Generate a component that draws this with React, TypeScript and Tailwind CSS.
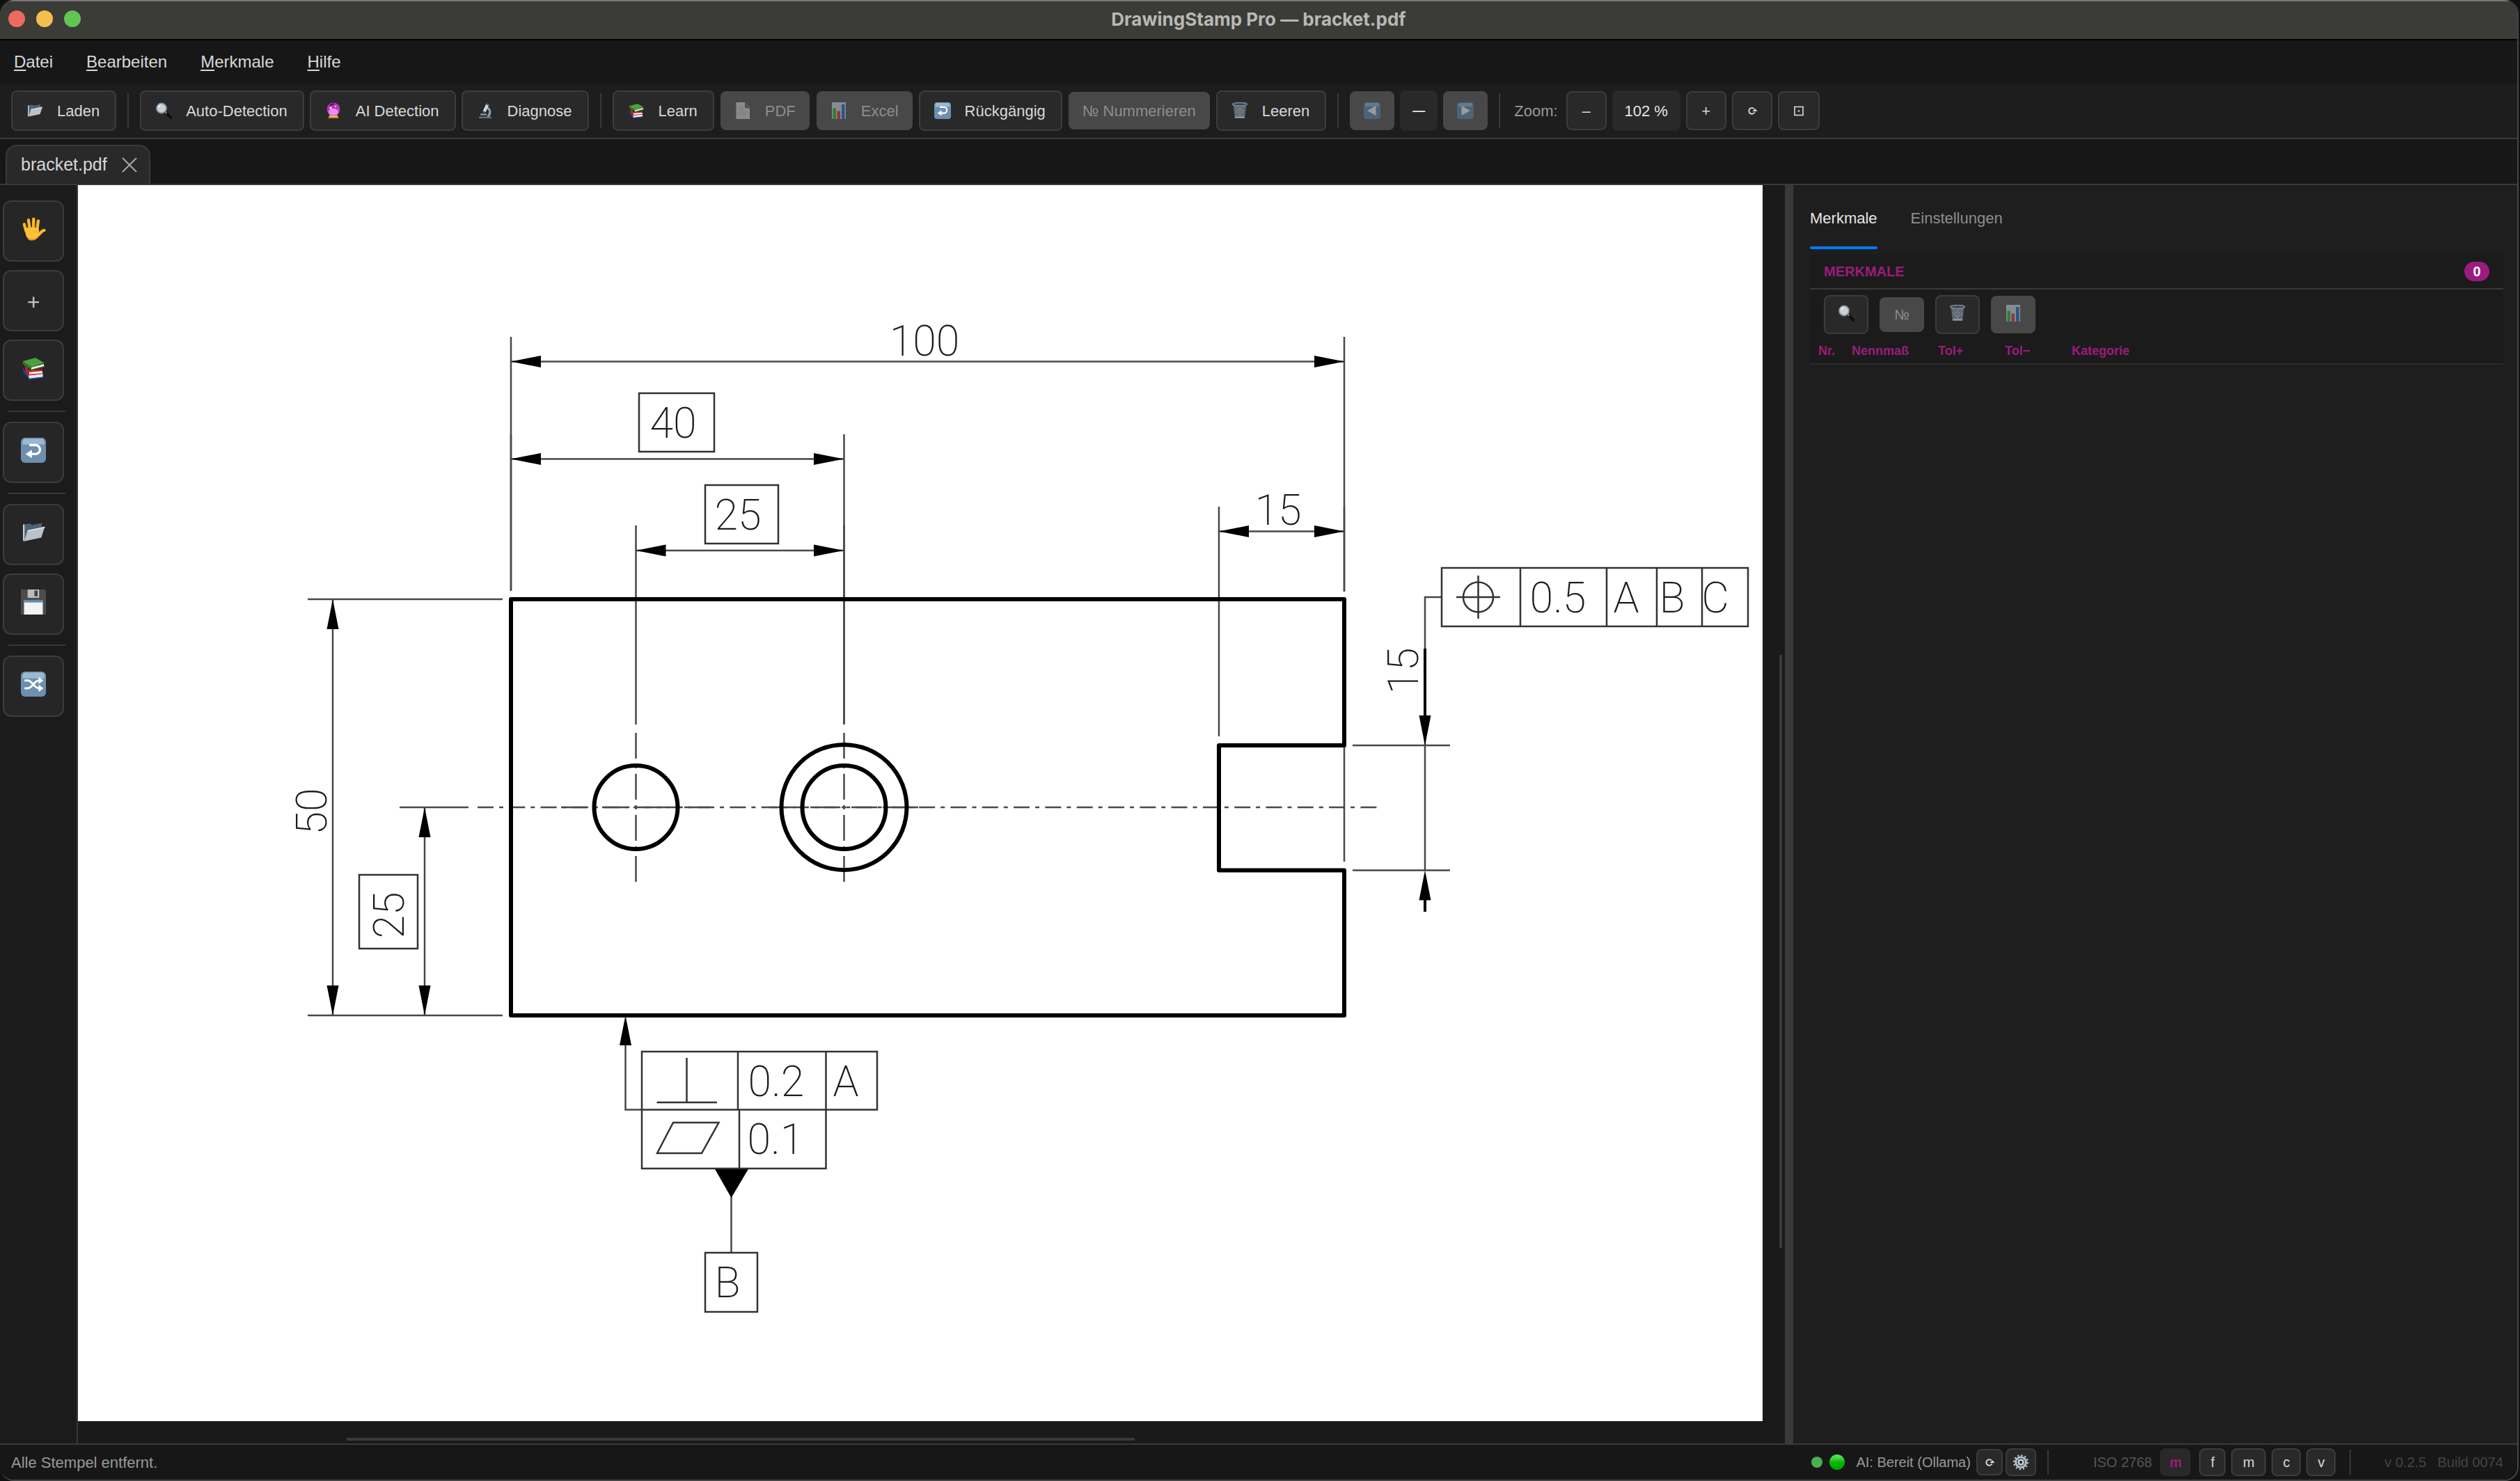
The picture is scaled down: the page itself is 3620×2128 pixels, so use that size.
import type { ReactNode } from 'react';

type IconName =
    | 'folder' | 'search' | 'orb' | 'microscope' | 'books' | 'doc' | 'chart' | 'undo' | 'trash'
    | 'prev' | 'next' | 'hand' | 'floppy' | 'shuffle' | 'gear' | 'reload' | 'fit';

const shapes: Record<IconName, ReactNode> = {
    folder: (
        <>
            <path d="M2 4.5l7-1 1.5 1.5L20 3v12L3 20z" fill="#4f6371" />
            <path d="M2 4.5l1.5-.3V18L3 20.5 2 20z" fill="#c3ced6" />
            <path d="M6.5 10L23 6.5 19.5 17 3 20.5z" fill="#b9c2cb" />
            <path d="M6.5 10L23 6.5l-.4 1.2L6.7 11z" fill="#dfe5ea" />
        </>
    ),
    search: (
        <>
            <path d="M15 14l7.5 8.5" stroke="#0c0c0c" strokeWidth="3.6" strokeLinecap="round" />
            <path d="M13.6 12.6l3 3.4" stroke="#8d9297" strokeWidth="1.8" />
            <circle cx="9" cy="8.5" r="7" fill="#cfcfcf" stroke="#7d98ad" strokeWidth="1.8" />
            <path d="M4.5 7a5 5 0 014-3.6" stroke="#fff" strokeWidth="1.2" fill="none" />
        </>
    ),
    orb: (
        <>
            <path d="M6 18h12l1.5 5h-15z" fill="#c08a24" />
            <path d="M7 19.5h10v1.5H7z" fill="#f6dc7a" />
            <circle cx="12" cy="10" r="9.5" fill="#b736b8" />
            <ellipse cx="12" cy="14" rx="7" ry="5" fill="#ee8cf2" />
            <path d="M7 5c1.5-2 4-2.8 6-2.4" stroke="#3e1250" strokeWidth="2" fill="none" />
            <circle cx="8" cy="8" r="1.5" fill="#fff" />
            <circle cx="15" cy="6" r="1.1" fill="#fbd9ff" />
        </>
    ),
    microscope: (
        <>
            <path d="M3 20.5h18V23H3z" fill="#5d6f7a" />
            <path d="M5 16.5h9v2H5z" fill="#9aa9b3" />
            <path d="M15 8c5 2 5 9 .5 12.5" stroke="#93a5b1" strokeWidth="3" fill="none" />
            <path d="M13.5 2l4 1.8-5 10.7-4-1.8z" fill="#c8d6e0" />
            <path d="M14 1l4 1.8-1 2-4-1.8z" fill="#4b545b" />
            <path d="M8.300 12.2l4.200 1.900-1 2.100-4-1.800z" fill="#3f4a52" />
        </>
    ),
    books: (
        <>
            <path d="M2 12l5 6v3.500L2.500 16z" fill="#2b3fae" />
            <path d="M7 18l14-1.500v4L8 22.500z" fill="#e9e9ee" />
            <path d="M7 17.500l15-1.800v1.500L7 19zM8 21.800l14-1.600v1L8 23z" fill="#2b3fae" />
            <path d="M4 9l3.500 5 13-1v4.500L7 19 4 13z" fill="#cf1f1b" />
            <path d="M8 15.800l12.500-1v2L8 17.900z" fill="#f4f4f4" />
            <path d="M1.500 5.500L14 2l8.500 5-12.500 4z" fill="#4aa23a" />
            <path d="M1.500 5.500L10 11v3L2 8.300z" fill="#2c7423" />
            <path d="M10 11.300l12-3.300v2.300L10 13.500z" fill="#f5f5f5" />
            <path d="M10 13.200l13-3.400v1L10 14.400z" fill="#2c7423" />
        </>
    ),
    doc: (
        <>
            <path d="M2.500 0H15l7 8v16H2.500z" fill="#8b8b8b" />
            <path d="M15 0l7 9.500-7-2z" fill="#4d4d4d" />
            <path d="M5.500 7h6M5.500 10.500h9M5.500 14h12M5.500 17.500h12" stroke="#777" strokeWidth="1" />
        </>
    ),
    chart: (
        <>
            <path d="M2 0h20v24H2z" fill="#858d94" />
            <path d="M3.500 8.500H8V24H3.500z" fill="#2f7d33" />
            <path d="M9.500 12.500H14V24H9.500z" fill="#96333a" />
            <path d="M16 3h4.500v21H16z" fill="#2c5588" />
        </>
    ),
    undo: (
        <>
            <rect x="0" y="0" width="24" height="24" rx="4" fill="#6d8fb0" />
            <path d="M1.500 4.500Q1.500 1 4.500 1h15q3 0 3 3.500v2h-21z" fill="#9bb9d3" />
            <path d="M8 7h6a4.200 4.200 0 010 8.600h-4" fill="none" stroke="#fff" strokeWidth="2.200" />
            <path d="M10.500 11.500v8L4.500 15.600z" fill="#fff" />
        </>
    ),
    trash: (
        <>
            <path d="M2.500 3h19l-2.300 20H4.800z" fill="#59616a" />
            <path d="M5 6l13 14M8 5l11 11M4.500 10l10 11M19 6L6 20M16 5L5 16M19.500 10l-10 11" stroke="#8e98a2" strokeWidth=".8" />
            <path d="M5 21.500h14" stroke="#a4afb9" strokeWidth="1.500" />
            <ellipse cx="12" cy="2.800" rx="10.500" ry="2.300" fill="#3c434a" stroke="#7f93a6" strokeWidth="1.300" />
        </>
    ),
    prev: (
        <>
            <rect width="24" height="24" rx="4" fill="#4d6378" />
            <path d="M2 3.500Q2 1 5 1h14q3 0 3 2.500V6H2z" fill="#5f7b92" />
            <path d="M17.500 5v14L5 12z" fill="#9b9b9b" />
        </>
    ),
    next: (
        <>
            <rect width="24" height="24" rx="4" fill="#4d6378" />
            <path d="M2 3.500Q2 1 5 1h14q3 0 3 2.500V6H2z" fill="#5f7b92" />
            <path d="M6.500 5v14L19 12z" fill="#9b9b9b" />
        </>
    ),
    hand: (
        <>
            <path
                d="M5 14L3.200 7.500M8.500 12L7.300 3.500M12 12l.2-9.500M15.500 12.500L16.600 4.300M17 17.500c1.800-1.300 3-4 5.300-4.200"
                stroke="#f9b828" strokeWidth="2.900" strokeLinecap="round" fill="none"
            />
            <path d="M3.700 11.500c4-1.500 9-1.500 13.300 0l.5 3.500 1 1.500c-2 4-4 6.500-8 6.500-4.500 0-6-4-6.800-11.500z" fill="#fcc237" />
            <path d="M6 19.500c2 3.500 8 3.500 11-.5" stroke="#df8f16" strokeWidth="1" fill="none" />
            <path d="M12 15c2-.8 4-.5 5 1" stroke="#eda01d" strokeWidth=".8" fill="none" />
        </>
    ),
    floppy: (
        <>
            <path d="M0 0h23l1 1.500V24H0z" fill="#4c4c4c" />
            <path d="M6.500 0h11v8h-11z" fill="#bcbcbc" />
            <path d="M13 1h3v5.500h-3z" fill="#3f3f3f" />
            <path d="M3 10.500h18V24H3z" fill="#f3f3f3" />
            <path d="M3 10.500h18v2H3z" fill="#5794c7" />
        </>
    ),
    shuffle: (
        <>
            <rect width="24" height="24" rx="4" fill="#6d8fb0" />
            <path d="M1.500 4.500Q1.500 1 4.500 1h15q3 0 3 3.500v2h-21z" fill="#9bb9d3" />
            <path d="M3.500 8.500h3c4.500 0 6 7.500 11 7.500M3.500 16h3c4.500 0 6-7.500 11-7.500" fill="none" stroke="#fff" strokeWidth="2" />
            <path d="M17 5l4.500 3.500L17 12zM17 12.500l4.500 3.500-4.500 3.500z" fill="#fff" />
        </>
    ),
    gear: (
        <>
            <circle cx="12" cy="12" r="10" fill="none" stroke="#b7c6d4" strokeWidth="2.400" strokeDasharray="2.200 3.036" />
            <circle cx="12" cy="12" r="7.500" fill="#4e5660" stroke="#b7c6d4" strokeWidth="2.600" />
            <path d="M12 5v14M5 12h14M7 7l10 10M17 7L7 17" stroke="#94a3b1" strokeWidth="1.200" />
            <circle cx="12" cy="12" r="3.200" fill="#2b2b2b" stroke="#dbe5ee" strokeWidth="1.800" />
        </>
    ),
    reload: (
        <>
            <path d="M14.600 9.300A4.300 4.300 0 1015.600 14" fill="none" stroke="#dadada" strokeWidth="1.900" />
            <path d="M12.500 13h7l-3.500-4z" fill="#dadada" />
        </>
    ),
    fit: (
        <>
            <rect x="6" y="6.500" width="12" height="12" fill="none" stroke="#dadada" strokeWidth="1.600" />
            <circle cx="12" cy="12.500" r="1.300" fill="#dadada" />
        </>
    ),
};

function Icon({ name, className = 'w-6 h-6' }: { name: IconName; className?: string }) {
    return (
        <svg className={`shrink-0 ${className}`} viewBox="0 0 24 24" aria-hidden="true">
            {shapes[name]}
        </svg>
    );
}

interface ToolButtonProps {
    icon?: IconName;
    label?: string;
    title?: string;
    disabled?: boolean;
    className?: string;
}

function ToolButton({ icon, label, title, disabled = false, className = 'h-[58px] pl-5 pr-[22px]' }: ToolButtonProps) {
    return (
        <button
            title={title}
            aria-label={label ?? title}
            disabled={disabled}
            className={`flex items-center justify-center gap-5 rounded-lg whitespace-nowrap ${disabled
                ? 'bg-[#484848] text-[#8d8d8d]'
                : 'bg-[#292929] border-2 border-[#3c3c3c] text-[#d8d8d8]'
                } ${className}`}
        >
            {icon && <Icon name={icon} />}
            {label && <span>{label}</span>}
        </button>
    );
}

function Separator() {
    return <div className="w-0.5 h-[50px] mx-2 bg-[#383838]" />;
}

const menus = ['Datei', 'Bearbeiten', 'Merkmale', 'Hilfe'];

const sideTools: { icon?: IconName; title: string; split?: boolean }[] = [
    { icon: 'hand', title: 'Verschieben' },
    { title: 'Hinzufügen' },
    { icon: 'books', title: 'Learn' },
    { icon: 'undo', title: 'Rückgängig', split: true },
    { icon: 'folder', title: 'Laden', split: true },
    { icon: 'floppy', title: 'Speichern' },
    { icon: 'shuffle', title: 'Neu ordnen', split: true },
];

type Dir = 'l' | 'r' | 'u' | 'd';

// Filled arrow head with its tip at x/y
function Arrow({ x, y, dir }: { x: number; y: number; dir: Dir }) {
    const angle = { l: 0, u: 90, r: 180, d: 270 }[dir];
    return <path d="M0 0l43-8.500v17z" transform={`translate(${x} ${y}) rotate(${angle})`} fill="#000" />;
}

function Label({ x, y, children, vertical = false }: { x: number; y: number; children: string; vertical?: boolean }) {
    return (
        <text
            x={x}
            y={y}
            textAnchor="middle"
            transform={vertical ? `rotate(-90 ${x} ${y})` : undefined}
            className="font-['Liberation_Sans_Narrow','Roboto',sans-serif] font-extralight text-[61px] fill-[#1c1c1c]"
        >
            {children}
        </text>
    );
}

function BracketDrawing() {
    return (
        <svg className="w-full h-full" viewBox="112 266 2420 1776" role="img" aria-label="bracket.pdf">
            {/* Extension and dimension lines */}
            <g fill="none" stroke="#484848" strokeWidth="2.500">
                <path d="M734 484V849M1931 484V850M734 519.500H1931" />
                <path d="M734 659.500H1212M1212.500 624V1041M734 624V849" />
                <path d="M913.500 791H1212M913.500 755V1041M1212.500 755V1041" />
                <path d="M1751 763.500H1931M1751 728V1058M1931 728V850M1931 1071V1238" />
                <path d="M442 861H722M478 861V1459M442 1459H722M575 1459H722" />
                <path d="M574 1160H673M610 1160V1459" />
                <path d="M1943 1071H2083M1943 1250.500H2083M2071 858H2047V1250" />
                <path d="M898.500 1480V1594.500H922M1050.500 1700V1800" />
            </g>
            <path d="M2047 932V1040M2047 1280V1310" stroke="#000" strokeWidth="4" />

            {/* Centre lines */}
            <g fill="none" stroke="#484848" strokeWidth="2.500">
                <path d="M686 1160H1979" strokeDasharray="23 8 6 8.300" />
                <path d="M806 1160H1021M1105 1160H1320M913.500 1053V1268M1212.500 1053V1268" strokeDasharray="37 8 6 8" />
            </g>

            {/* Part outline */}
            <g fill="none" stroke="#000" strokeWidth="6" strokeLinejoin="round">
                <path d="M734 861H1931V1071H1751V1250.500H1931V1459H734z" />
                <circle cx="913.500" cy="1160" r="60" />
                <circle cx="1212.500" cy="1160" r="60" />
                <circle cx="1212.500" cy="1160" r="90" />
            </g>

            <Arrow x={734} y={519.5} dir="l" />
            <Arrow x={1931} y={519.5} dir="r" />
            <Arrow x={734} y={659.5} dir="l" />
            <Arrow x={1212} y={659.5} dir="r" />
            <Arrow x={913.5} y={791} dir="l" />
            <Arrow x={1212} y={791} dir="r" />
            <Arrow x={1751} y={763.5} dir="l" />
            <Arrow x={1931} y={763.5} dir="r" />
            <Arrow x={478} y={861} dir="u" />
            <Arrow x={478} y={1459} dir="d" />
            <Arrow x={610} y={1160} dir="u" />
            <Arrow x={610} y={1459} dir="d" />
            <Arrow x={2047} y={1071} dir="d" />
            <Arrow x={2047} y={1250.5} dir="u" />
            <Arrow x={898.5} y={1459} dir="u" />
            <path d="M1026.500 1679h49L1050.500 1721z" fill="#000" />

            {/* Boxed dimensions and tolerance frames */}
            <g fill="none" stroke="#333" strokeWidth="2.500">
                <path d="M918 565H1026V649H918zM1013 697H1118V781H1013zM516 1257H600V1363H516zM1013 1800H1088V1885H1013z" />
                <path d="M2071 816H2511V900H2071zM2184 816V900M2308 816V900M2380 816V900M2445 816V900" />
                <path d="M922 1511H1260V1594.500H922zM1060 1511V1594M1186.500 1511V1594M922 1594V1679H1186.500V1594M1062 1594V1679" />
                <circle cx="2123.500" cy="858" r="21.500" />
                <path d="M2092 858H2155M2123.500 827V889M986.500 1520V1584M943.500 1584H1030" />
                <path d="M944 1657L967 1613H1032.500L1008 1657z" />
            </g>

            <Label x={1328} y={511}>100</Label>
            <Label x={967} y={629}>40</Label>
            <Label x={1060} y={761}>25</Label>
            <Label x={1836} y={754}>15</Label>
            <Label x={469} y={1166} vertical>50</Label>
            <Label x={580} y={1315} vertical>25</Label>
            <Label x={2037} y={964} vertical>15</Label>
            <Label x={2238} y={880}>0.5</Label>
            <Label x={2336} y={880}>A</Label>
            <Label x={2402} y={880}>B</Label>
            <Label x={2464} y={880}>C</Label>
            <Label x={1115} y={1575}>0.2</Label>
            <Label x={1215} y={1575}>A</Label>
            <Label x={1114} y={1658}>0.1</Label>
            <Label x={1045} y={1864}>B</Label>
        </svg>
    );
}

function MerkmalePanel() {
    return (
        <aside className="w-[1040px] shrink-0 bg-[#1e1e1e] pl-6 pr-5">
            <nav className="flex gap-12 pt-8 text-[22px]">
                <button className="h-[60px] flex flex-col justify-between text-[#e6e6e6]">
                    <span className="leading-8">Merkmale</span>
                    <span className="w-full h-1 rounded-full bg-[#007aff]" />
                </button>
                <button className="h-[60px] flex flex-col text-[#8d8d8d]">
                    <span className="leading-8">Einstellungen</span>
                </button>
            </nav>

            <section className="mt-2 bg-[#1b1b1b]">
                <header className="h-[50px] flex items-center justify-between px-5 border-b-2 border-[#3a3a3a]">
                    <h2 className="text-[20px] font-bold text-[#9b1b7e]">MERKMALE</h2>
                    <span className="w-9 h-7 flex items-center justify-center rounded-full bg-[#9b1b7e] text-white text-[20px] font-bold">0</span>
                </header>
                <div className="h-[72px] flex items-center gap-4 px-5 text-[20px]">
                    <ToolButton icon="search" title="Suchen" className="w-16 h-[56px] pb-1" />
                    <ToolButton label="№" disabled className="w-16 h-[50px]" />
                    <ToolButton icon="trash" title="Leeren" className="w-16 h-[56px] pb-1" />
                    <ToolButton icon="chart" title="Excel" disabled className="w-16 h-[54px] pb-1" />
                </div>
                <table className="w-full table-fixed text-left text-[18px] leading-6 text-[#9b1b7e]">
                    <thead>
                        <tr className="border-b-2 border-[#2b2b2b]">
                            <th className="w-12 pl-3 pt-1 pb-1.5">Nr.</th>
                            <th className="w-[124px] pl-3 pt-1 pb-1.5">Nennmaß</th>
                            <th className="w-24 pl-3 pt-1 pb-1.5">Tol+</th>
                            <th className="w-24 pl-3 pt-1 pb-1.5">Tol−</th>
                            <th className="pl-3 pt-1 pb-1.5">Kategorie</th>
                        </tr>
                    </thead>
                    <tbody />
                </table>
            </section>
        </aside>
    );
}

function StatusBar() {
    return (
        <footer className="h-[52px] shrink-0 flex items-center justify-between pl-4 pr-5 bg-[#171717] border-t-2 border-[#3a3a3a] text-[20px]">
            <span className="text-[22px] text-[#999]">Alle Stempel entfernt.</span>
            <div className="flex items-center">
                <span className="w-4 h-4 rounded-full bg-[#4caf50]" />
                <span className="w-[22px] h-[22px] ml-2.5 rounded-full bg-linear-to-b from-[#5cf05c] via-[#00b800] to-[#00a000]" />
                <span className="ml-4 mr-2 text-[#999]">AI: Bereit (Ollama)</span>
                <ToolButton icon="reload" title="Neu verbinden" className="w-[38px] h-[38px]" />
                <ToolButton icon="gear" title="Einstellungen" className="w-11 h-[40px] ml-1" />
                <div className="w-0.5 h-9 ml-4 bg-[#383838]" />
                <span className="ml-16 mr-3 text-[#555]">ISO 2768</span>
                <button className="w-11 h-10 rounded-lg bg-[#292929] font-bold text-[#9b1b7e]">m</button>
                <div className="flex gap-2 ml-3 font-medium">
                    <ToolButton label="f" className="w-[38px] h-10" />
                    <ToolButton label="m" className="w-[50px] h-10" />
                    <ToolButton label="c" className="w-[42px] h-10" />
                    <ToolButton label="v" className="w-[42px] h-10" />
                </div>
                <div className="w-0.5 h-9 ml-5 bg-[#383838]" />
                <span className="ml-12 text-[#444]">v 0.2.5</span>
                <span className="ml-4 text-[#444]">Build 0074</span>
            </div>
        </footer>
    );
}

export default function App() {
    return (
        <div className="h-screen bg-[#111] pr-0.5 font-['Liberation_Sans',Arial,sans-serif]">
            <div className="h-full flex flex-col overflow-hidden rounded-[20px] border-r-2 border-b-2 border-[#454545] bg-[#171717]">
                {/* Title bar */}
                <header className="relative h-[58px] shrink-0 flex items-center justify-center pb-1 bg-[#3b3b38] border-t-2 border-t-[#777] border-b-2 border-b-black">
                    <div className="absolute left-3 flex gap-4">
                        <span className="w-6 h-6 rounded-full bg-[#ed6a5e]" />
                        <span className="w-6 h-6 rounded-full bg-[#f5bf4f]" />
                        <span className="w-6 h-6 rounded-full bg-[#61c554]" />
                    </div>
                    <h1 className="font-['Inter',sans-serif] text-[26px] font-bold text-[#b8b8b6]">DrawingStamp Pro — bracket.pdf</h1>
                </header>

                {/* Menu */}
                <nav className="h-[62px] shrink-0 flex items-center gap-12 pl-5 text-[24px] text-[#d8d8d8]">
                    {menus.map((menu) => (
                        <button key={menu}>
                            <span className="underline underline-offset-3 decoration-2">{menu[0]}</span>
                            {menu.slice(1)}
                        </button>
                    ))}
                </nav>

                {/* Toolbar */}
                <div className="h-20 shrink-0 flex items-center gap-2 px-4 bg-[#1d1d1d] border-b-2 border-[#3a3a3a] text-[22px]">
                    <ToolButton icon="folder" label="Laden" />
                    <Separator />
                    <ToolButton icon="search" label="Auto-Detection" />
                    <ToolButton icon="orb" label="AI Detection" />
                    <ToolButton icon="microscope" label="Diagnose" />
                    <Separator />
                    <ToolButton icon="books" label="Learn" />
                    <ToolButton icon="doc" label="PDF" disabled className="h-14 px-5 mx-px" />
                    <ToolButton icon="chart" label="Excel" disabled className="h-14 px-5 mx-px" />
                    <ToolButton icon="undo" label="Rückgängig" />
                    <ToolButton label="№ Nummerieren" disabled className="h-[54px] px-5 mx-px" />
                    <ToolButton icon="trash" label="Leeren" />
                    <Separator />
                    <ToolButton icon="prev" title="Zurück" disabled className="w-16 h-14" />
                    <span className="w-[54px] h-[58px] flex items-center justify-center rounded-lg bg-[#292929] text-lg font-bold text-[#e6e6e6]">—</span>
                    <ToolButton icon="next" title="Weiter" disabled className="w-16 h-14" />
                    <Separator />
                    <span className="mx-1 text-[#999]">Zoom:</span>
                    <ToolButton label="–" className="w-[58px] h-14" />
                    <span className="w-[98px] h-[58px] flex items-center justify-center rounded-lg bg-[#292929] text-[#e6e6e6]">102 %</span>
                    <ToolButton label="+" className="w-[58px] h-14" />
                    <ToolButton icon="reload" title="Zoom zurücksetzen" className="w-[58px] h-14" />
                    <ToolButton icon="fit" title="Einpassen" className="w-[60px] h-14" />
                </div>

                {/* Document tabs */}
                <div className="h-[66px] shrink-0 flex items-end pl-2 border-b-2 border-[#3a3a3a]">
                    <div className="h-14 flex items-center gap-5 pl-5 pr-4 rounded-t-2xl bg-[#292929] border-2 border-b-0 border-[#3a3a3a]">
                        <span className="text-[25px] text-[#d8d8d8]">bracket.pdf</span>
                        <button aria-label="Schließen">
                            <svg className="w-6 h-6" viewBox="0 0 24 24" stroke="#a8a8a8" strokeWidth="2">
                                <path d="M2 2l20 20M22 2L2 22" />
                            </svg>
                        </button>
                    </div>
                </div>

                <main className="flex-1 min-h-0 flex">
                    {/* Side tools */}
                    <div className="w-28 shrink-0 flex flex-col pt-[22px] pl-1 bg-[#1b1b1b] border-r-2 border-[#383838]">
                        {sideTools.map((tool) => (
                            <div key={tool.title}>
                                {tool.split && <div className="w-[82px] h-0.5 ml-2 mt-0.5 mb-3.5 bg-[#383838]" />}
                                <button
                                    aria-label={tool.title}
                                    className={`w-[88px] h-[88px] mb-3 flex items-center justify-center rounded-xl bg-[#262626] border-2 border-[#3c3c3c] text-[32px] text-[#c4c4c4] ${tool.icon ? 'pb-1.5' : 'pt-1'}`}
                                >
                                    {tool.icon ? <Icon name={tool.icon} className="w-9 h-9" /> : '+'}
                                </button>
                            </div>
                        ))}
                    </div>

                    {/* Drawing with its scroll bars */}
                    <div className="flex-1 min-w-0 flex flex-col bg-[#1a1a1a]">
                        <div className="flex-1 min-h-0 flex">
                            <div className="flex-1 min-w-0 bg-white">
                                <BracketDrawing />
                            </div>
                            <div className="w-8 shrink-0 flex flex-col pl-6">
                                <div className="grow-[38]" />
                                <div className="grow-[48] w-1 bg-[#3a3a3a]" />
                                <div className="grow-[14]" />
                            </div>
                        </div>
                        <div className="h-8 shrink-0 flex items-end pb-1">
                            <div className="grow-[386]" />
                            <div className="grow-[1132] h-1 bg-[#3a3a3a]" />
                            <div className="grow-[934]" />
                        </div>
                    </div>
                    <div className="w-3 shrink-0 bg-[#3a3a3a]" />
                    <MerkmalePanel />
                </main>

                <StatusBar />
            </div>
        </div>
    );
}
